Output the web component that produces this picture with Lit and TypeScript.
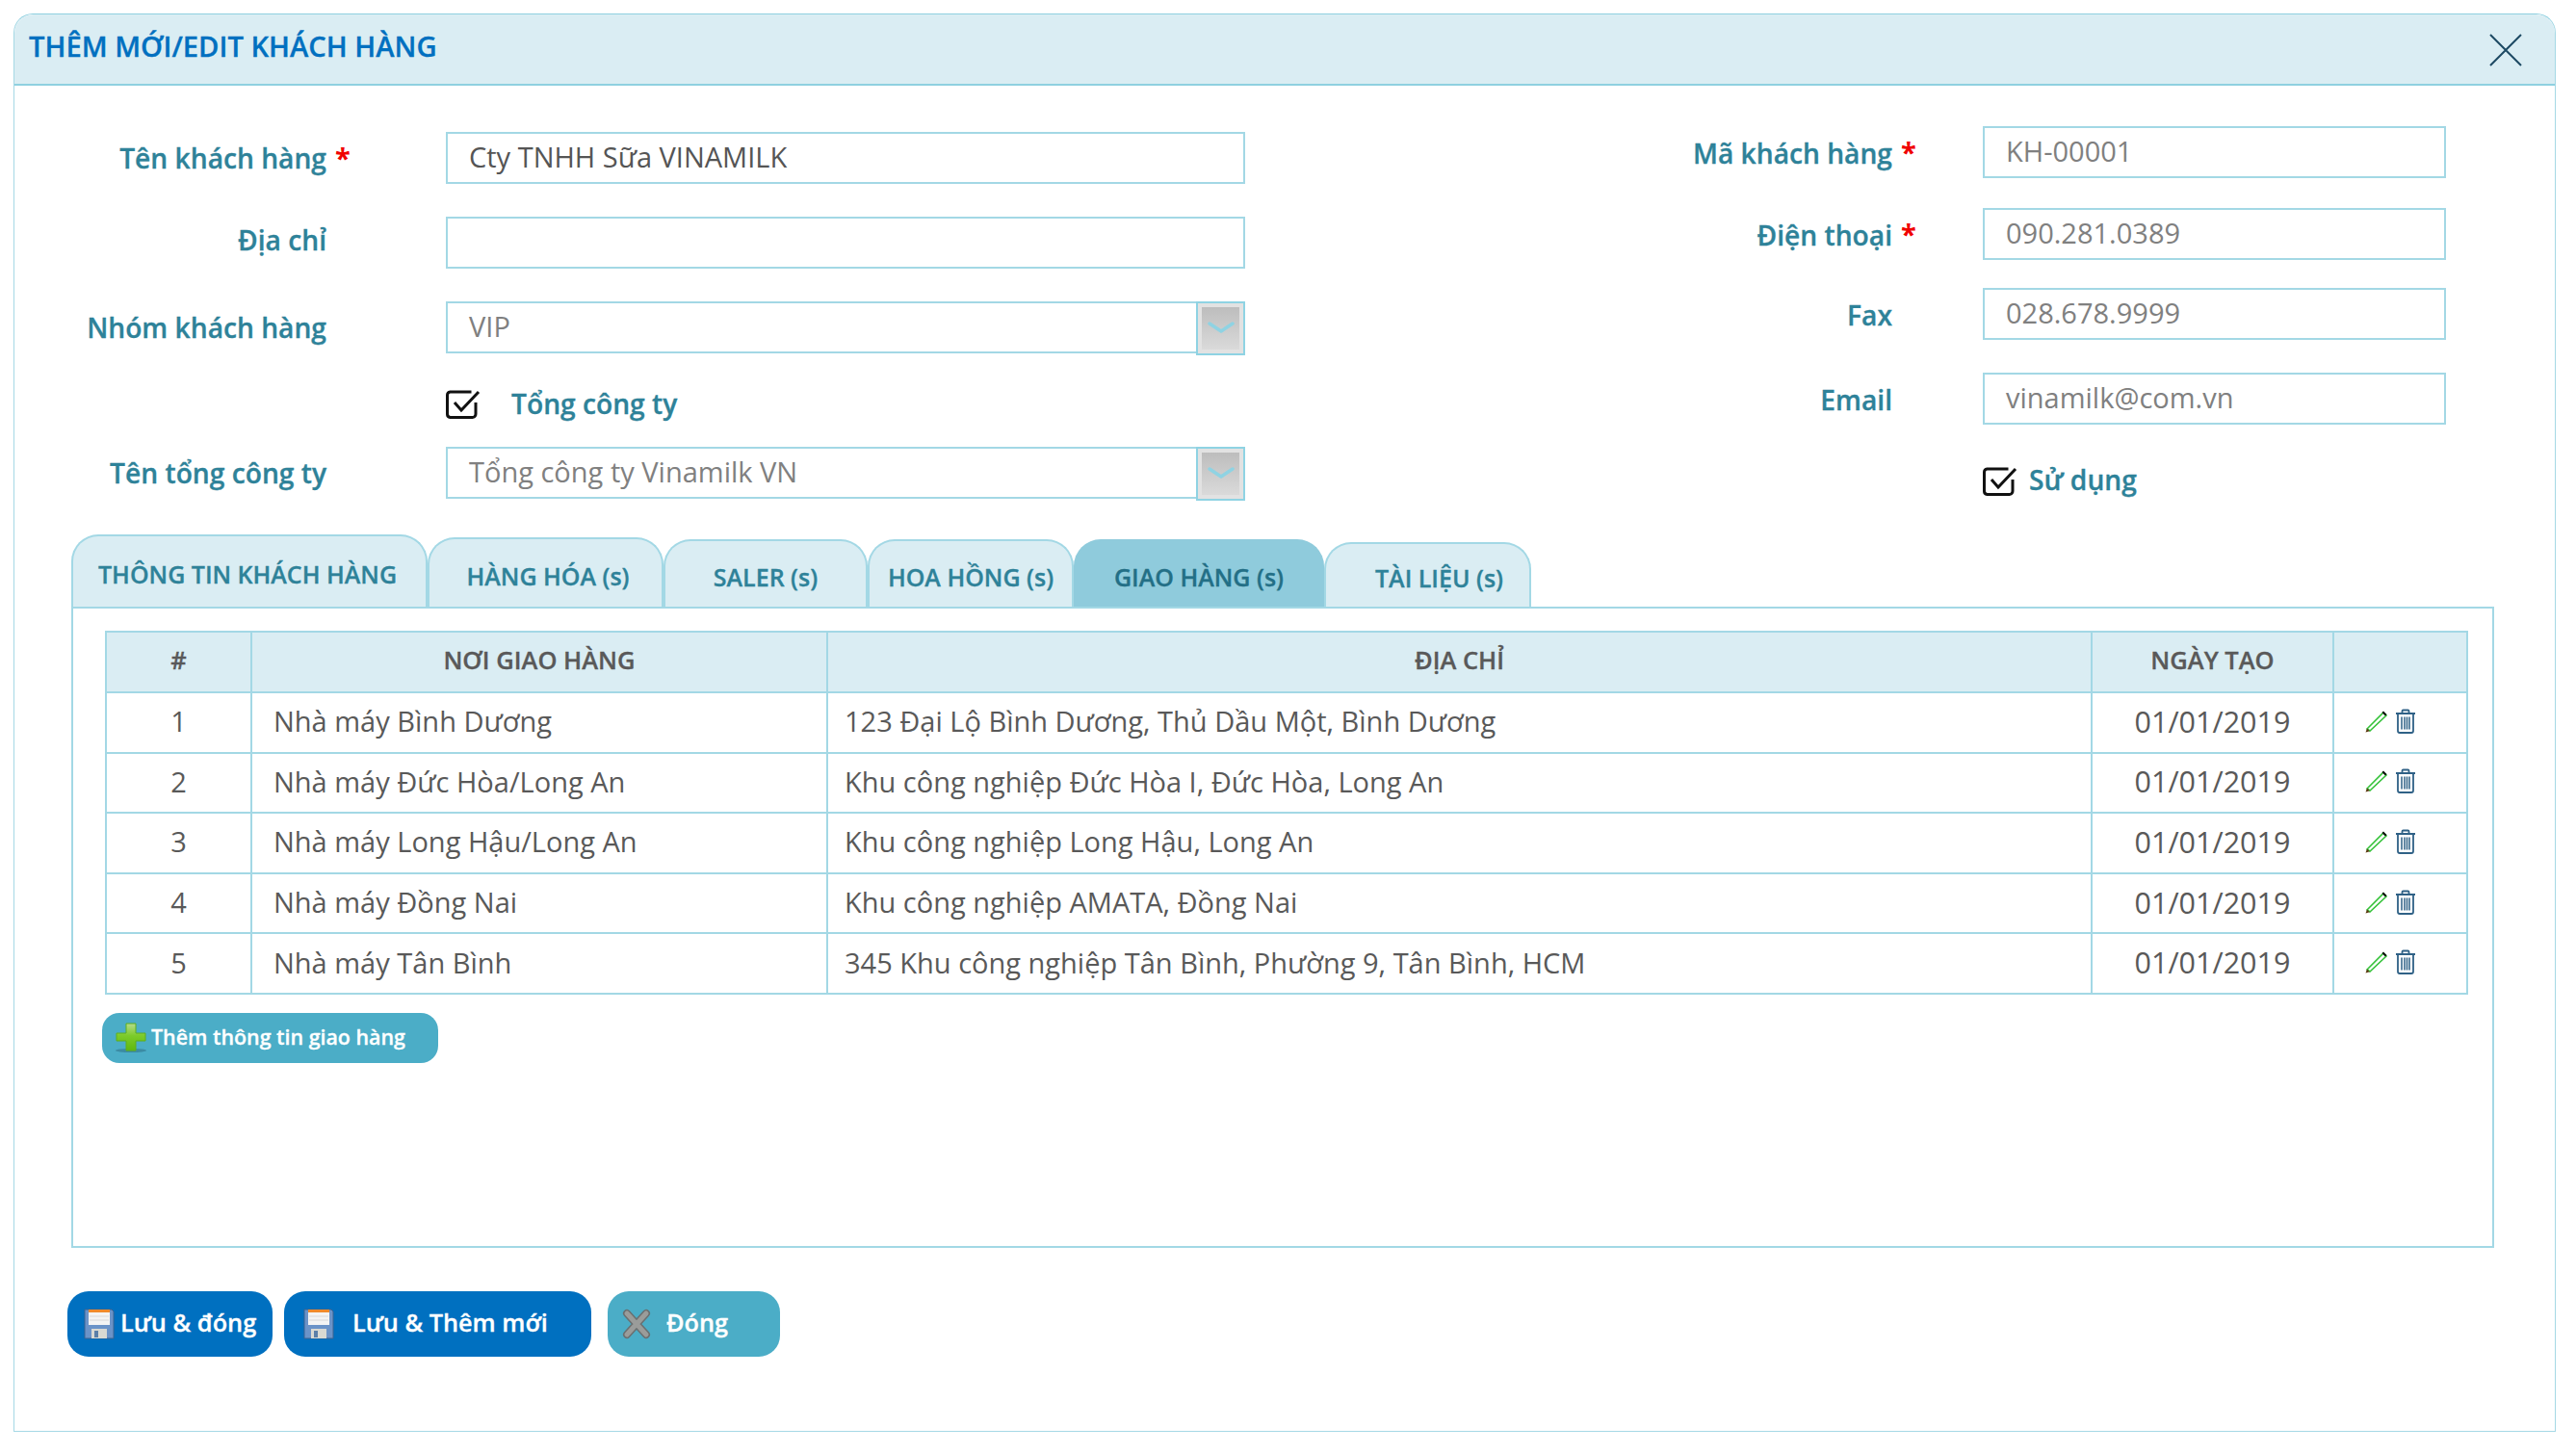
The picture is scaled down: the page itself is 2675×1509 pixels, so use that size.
import { LitElement, html, css, svg } from 'lit';
import { customElement } from 'lit/decorators.js';

const ROWS = [
  ['1', 'Nhà máy Bình Dương', '123 Đại Lộ Bình Dương, Thủ Dầu Một, Bình Dương'],
  ['2', 'Nhà máy Đức Hòa/Long An', 'Khu công nghiệp Đức Hòa I, Đức Hòa, Long An'],
  ['3', 'Nhà máy Long Hậu/Long An', 'Khu công nghiệp Long Hậu, Long An'],
  ['4', 'Nhà máy Đồng Nai', 'Khu công nghiệp AMATA, Đồng Nai'],
  ['5', 'Nhà máy Tân Bình', '345 Khu công nghiệp Tân Bình, Phường 9, Tân Bình, HCM'],
];

const TABS = [
  { label: 'THÔNG TIN KHÁCH HÀNG', cls: 't1' },
  { label: 'HÀNG HÓA (s)', cls: 't2' },
  { label: 'SALER (s)', cls: 't3' },
  { label: 'HOA HỒNG (s)', cls: 't4' },
  { label: 'GIAO HÀNG (s)', cls: 't5 active' },
  { label: 'TÀI LIỆU (s)', cls: 't6' },
];

const checkIcon = svg`<svg class="check" viewBox="0 0 36 30" width="36" height="30">
  <path d="M31 13v12a3.500 3.500 0 0 1-3.500 3.500H4.500A3.500 3.500 0 0 1 1.500 25V5.500A3.500 3.500 0 0 1 4.500 2h22" fill="none" stroke="#111" stroke-width="3"/>
  <path d="M9 13l7 8L34 2" fill="none" stroke="#111" stroke-width="3"/>
</svg>`;

const chevron = svg`<svg viewBox="0 0 30 14" width="30" height="14"><path d="M3 2l12 8 12-8" fill="none" stroke="#8fd3e3" stroke-width="3.500" stroke-linecap="round" stroke-linejoin="round"/></svg>`;

const pencil = svg`<svg viewBox="0 0 24 24" width="24" height="24">
  <path d="M2 20L19 3l3 3L5 22z" fill="#fff" stroke="#35c23a" stroke-width="1.600"/>
  <path d="M19 1.500l3.500 3.500-1.500 1.500-3.500-3.500z" fill="#111"/>
  <path d="M0.500 23.500l1.500-4 2.800 2.800z" fill="#5a3a10"/>
</svg>`;

const trash = svg`<svg viewBox="0 0 22 26" width="22" height="26">
  <path d="M1 5h20M7.500 5V2.500a1 1 0 0 1 1-1h5a1 1 0 0 1 1 1V5" fill="none" stroke="#2f6186" stroke-width="1.800"/>
  <path d="M3 5v18a2 2 0 0 0 2 2h12a2 2 0 0 0 2-2V5" fill="none" stroke="#2f6186" stroke-width="1.800"/>
  <path d="M7 8.500v13M10 8.500v13M12.500 8.500v13M15 8.500v13" fill="none" stroke="#2f6186" stroke-width="1.500"/>
</svg>`;

const plus = svg`<svg viewBox="0 0 34 32" width="34" height="32">
  <defs><linearGradient id="pg" x1="0" y1="0" x2="0" y2="1"><stop offset="0" stop-color="#b5dc8d"/><stop offset=".45" stop-color="#7ccb2a"/><stop offset="1" stop-color="#5fb80e"/></linearGradient></defs>
  <ellipse cx="17" cy="29" rx="16" ry="2" fill="#3b8ba3"/>
  <path d="M12 1h10v10h10v8H22v10H12V19H2v-8h10z" fill="url(#pg)" stroke="#5fae1c" stroke-width="1"/>
</svg>`;

const floppy = svg`<svg viewBox="0 0 32 32" width="32" height="32">
  <path d="M1 1h28l2 2v28H1z" fill="#6b93c8" stroke="#3c628f" stroke-width="1"/>
  <rect x="5" y="1" width="22" height="16" fill="#f4f4f4"/>
  <rect x="5" y="1" width="22" height="3" fill="#ef8a2c"/>
  <path d="M6 8h20M6 12h20" stroke="#d8d8d8" stroke-width="1"/>
  <rect x="8" y="21" width="16" height="10" fill="#d9d9d2"/>
  <rect x="11" y="23" width="4" height="7" fill="#5b7fa8"/>
</svg>`;

const greyX = svg`<svg viewBox="0 0 32 32" width="32" height="32">
  <path d="M6 5l20 22M26 5L6 27" stroke="#6a6f70" stroke-width="8" stroke-linecap="round"/>
  <path d="M6 5l20 22M26 5L6 27" stroke="#9a9c9a" stroke-width="5" stroke-linecap="round"/>
</svg>`;

@customElement('app-root')
export class AppRoot extends LitElement {
  static styles = css`
    :host {
      display: block;
      height: 1509px;
      background: #fff;
      font-family: 'Open Sans', 'Noto Sans', sans-serif;
      color: #595959;
      padding-top: 14px;
      box-sizing: border-box;
    }
    * {
      box-sizing: border-box;
    }
    .dialog {
      margin-left: 14px;
      width: 2640px;
      height: 1473px;
      border: 1px solid #a5d8e5;
      border-top-color: #8fd0e0;
      border-radius: 20px 20px 0 0;
    }
    .head {
      height: 74px;
      background: #daedf3;
      border-bottom: 2px solid #8fd0e0;
      border-radius: 20px 20px 0 0;
      display: flex;
      align-items: center;
      justify-content: space-between;
      padding: 0 34px 6px 15px;
    }
    .title {
      font-size: 29.200px;
      font-weight: 600;
      -webkit-text-stroke: 0.3px currentColor;
      color: #0070c0;
    }
    .close {
      display: block;
      margin-top: 8px;
    }
    .form {
      display: flex;
      height: 465px;
    }
    .left {
      width: 1293px;
      padding-top: 48px;
    }
    .right {
      margin-left: 382px;
      padding-top: 42px;
    }
    .row {
      display: flex;
      align-items: center;
      height: 54px;
    }
    .left .row + .row {
      margin-top: 34px;
    }
    .left .row.check-row {
      margin-top: 39px;
      height: 28px;
    }
    .left .row.check-row + .row {
      margin-top: 30px;
    }
    .right .row:nth-child(2) {
      margin-top: 31px;
    }
    .right .row:nth-child(3) {
      margin-top: 29px;
    }
    .right .row:nth-child(4) {
      margin-top: 34px;
    }
    .right .row.check-row {
      margin-top: 45px;
      height: 28px;
    }
    .left .label {
      width: 324px;
    }
    .right .label {
      width: 275px;
      padding-top: 2px;
    }
    .label {
      flex: none;
      text-align: right;
      font-size: 28.200px;
      font-weight: 600;
      -webkit-text-stroke: 0.3px currentColor;
      color: #2e8299;
      white-space: nowrap;
    }
    .left .label.raise {
      padding-bottom: 7px;
    }
    .star {
      flex: none;
      font-size: 29px;
      font-weight: 700;
      color: #f00000;
      margin-left: 9px;
      line-height: 1;
    }
    .left .slot {
      width: 124px;
      flex: none;
    }
    .right .slot {
      width: 94px;
      flex: none;
    }
    .field {
      height: 54px;
      border: 2px solid #a3d8e5;
      padding: 0 22px 4px;
      display: flex;
      align-items: center;
      font-size: 29px;
      color: #808080;
      position: relative;
    }
    .left .field {
      width: 830px;
    }
    .right .field {
      width: 481px;
    }
    .field.dark {
      color: #555;
    }
    .drop {
      position: absolute;
      right: -2px;
      top: -2px;
      width: 51px;
      height: 56px;
      border: 2px solid #8fd3e3;
      background: #e2e2e2;
      padding: 4px;
    }
    .drop div {
      height: 100%;
      background: linear-gradient(#bdbdbd, #dadada);
      display: flex;
      align-items: center;
      justify-content: center;
    }
    .check {
      display: block;
      flex: none;
    }
    .check-label {
      font-size: 28.200px;
      font-weight: 600;
      -webkit-text-stroke: 0.3px currentColor;
      color: #2e8299;
      margin-left: 32px;
      padding-bottom: 3px;
      white-space: nowrap;
    }
    .right .check-label {
      margin-left: 12px;
      padding-bottom: 4px;
    }
    .tabs-area {
      padding-left: 59px;
    }
    .tabs {
      display: flex;
      align-items: flex-end;
      height: 76px;
      position: relative;
    }
    .tab {
      flex: none;
      border: 2px solid #a3d8e5;
      border-bottom: none;
      border-radius: 28px 28px 0 0;
      background: #daedf3;
      color: #2e8299;
      font-size: 25px;
      font-weight: 600;
      -webkit-text-stroke: 0.3px currentColor;
      display: flex;
      align-items: center;
      justify-content: center;
      white-space: nowrap;
      padding-top: 6px;
    }
    .t1 { width: 370px; height: 75px; padding-right: 4px; padding-top: 4px; }
    .t2 { width: 245px; height: 72px; padding-left: 5px; }
    .t3 { width: 212px; height: 70px; }
    .t4 { width: 214px; height: 70px; }
    .t5 { width: 260px; height: 70px; }
    .t6 { width: 215px; height: 67px; padding-left: 24px; padding-top: 4px; }
    .tab.active {
      background: #8fcbdc;
      color: #236f86;
      border-color: #8fcbdc;
    }
    .pane {
      width: 2516px;
      height: 666px;
      border: 2px solid #a3d8e5;
      padding: 23px 0 0 33px;
    }
    table {
      border-collapse: collapse;
      table-layout: fixed;
      width: 2452px;
    }
    th, td {
      border: 2px solid #a3d8e5;
      height: 62.600px;
      font-size: 29px;
      padding: 0 0 3px;
      white-space: nowrap;
    }
    th {
      height: 63px;
      background: #daedf3;
      font-size: 25.500px;
      font-weight: 600;
      -webkit-text-stroke: 0.3px currentColor;
      text-align: center;
      padding-bottom: 5px;
    }
    td.c {
      text-align: center;
    }
    td.date {
      font-size: 30.500px;
    }
    td.name {
      padding-left: 22px;
    }
    td.addr {
      padding-left: 17px;
    }
    .acts {
      display: flex;
      align-items: center;
      gap: 7px;
      padding-left: 32px;
    }
    .acts svg {
      display: block;
      flex: none;
    }
    .btn {
      display: inline-flex;
      align-items: center;
      color: #fff;
      font-weight: 600;
      -webkit-text-stroke: 0.3px currentColor;
      white-space: nowrap;
    }
    .add {
      margin: 19px 0 0 -3px;
      width: 349px;
      height: 52px;
      border-radius: 18px;
      background: #4badc7;
      font-size: 21.400px;
      padding-left: 13px;
      padding-bottom: 3px;
      gap: 4px;
    }
    .add svg {
      display: block;
      margin-top: 4px;
    }
    .foot {
      display: flex;
      padding: 45px 0 0 55px;
    }
    .foot .btn {
      height: 68px;
      border-radius: 22px;
      font-size: 25.300px;
      background: #0070c0;
    }
    .foot span {
      padding-bottom: 4px;
    }
    .foot svg {
      display: block;
      flex: none;
    }
    .b1 {
      width: 213px;
      padding-left: 17px;
      gap: 6px;
    }
    .b2 {
      width: 319px;
      margin-left: 12px;
      padding-left: 20px;
      gap: 19px;
    }
    .foot .b3 {
      width: 179px;
      margin-left: 17px;
      padding-left: 14px;
      gap: 15px;
      background: #4badc7;
    }
  `;

  renderField(label: string, value: string, opts: { star?: boolean; dark?: boolean; drop?: boolean; raise?: boolean } = {}) {
    return html`
      <div class="row">
        <div class="label ${opts.raise ? 'raise' : ''}">${label}</div>
        <div class="slot">${opts.star ? html`<span class="star">*</span>` : ''}</div>
        <div class="field ${opts.dark ? 'dark' : ''}">
          ${value}
          ${opts.drop ? html`<div class="drop"><div>${chevron}</div></div>` : ''}
        </div>
      </div>
    `;
  }

  render() {
    return html`
      <div class="dialog">
        <div class="head">
          <div class="title">THÊM MỚI/EDIT KHÁCH HÀNG</div>
          <svg class="close" viewBox="0 0 34 34" width="34" height="34">
            <path d="M1 1l32 32M33 1L1 33" stroke="#1d4a63" stroke-width="2" fill="none"/>
          </svg>
        </div>

        <div class="form">
          <div class="left">
            ${this.renderField('Tên khách hàng', 'Cty TNHH Sữa VINAMILK', { star: true, dark: true })}
            ${this.renderField('Địa chỉ', '', { raise: true })}
            ${this.renderField('Nhóm khách hàng', 'VIP', { drop: true })}
            <div class="row check-row">
              <div class="label"></div>
              <div class="slot"></div>
              ${checkIcon}
              <span class="check-label">Tổng công ty</span>
            </div>
            ${this.renderField('Tên tổng công ty', 'Tổng công ty Vinamilk VN', { drop: true })}
          </div>
          <div class="right">
            ${this.renderField('Mã khách hàng', 'KH-00001', { star: true })}
            ${this.renderField('Điện thoại', '090.281.0389', { star: true })}
            ${this.renderField('Fax', '028.678.9999')}
            ${this.renderField('Email', 'vinamilk@com.vn')}
            <div class="row check-row">
              <div class="label"></div>
              <div class="slot"></div>
              ${checkIcon}
              <span class="check-label">Sử dụng</span>
            </div>
          </div>
        </div>

        <div class="tabs-area">
          <div class="tabs">
            ${TABS.map((t) => html`<div class="tab ${t.cls}">${t.label}</div>`)}
          </div>
          <div class="pane">
            <table>
              <colgroup>
                <col style="width:151px" />
                <col style="width:598px" />
                <col style="width:1313px" />
                <col style="width:251px" />
                <col style="width:139px" />
              </colgroup>
              <thead>
                <tr>
                  <th>#</th>
                  <th>NƠI GIAO HÀNG</th>
                  <th>ĐỊA CHỈ</th>
                  <th>NGÀY TẠO</th>
                  <th></th>
                </tr>
              </thead>
              <tbody>
                ${ROWS.map(
                  (r) => html`
                    <tr>
                      <td class="c">${r[0]}</td>
                      <td class="name">${r[1]}</td>
                      <td class="addr">${r[2]}</td>
                      <td class="c date">01/01/2019</td>
                      <td><div class="acts">${pencil}${trash}</div></td>
                    </tr>
                  `,
                )}
              </tbody>
            </table>
            <div class="btn add">${plus}<span>Thêm thông tin giao hàng</span></div>
          </div>
        </div>

        <div class="foot">
          <div class="btn b1">${floppy}<span>Lưu &amp; đóng</span></div>
          <div class="btn b2">${floppy}<span>Lưu &amp; Thêm mới</span></div>
          <div class="btn b3">${greyX}<span>Đóng</span></div>
        </div>
      </div>
    `;
  }
}
